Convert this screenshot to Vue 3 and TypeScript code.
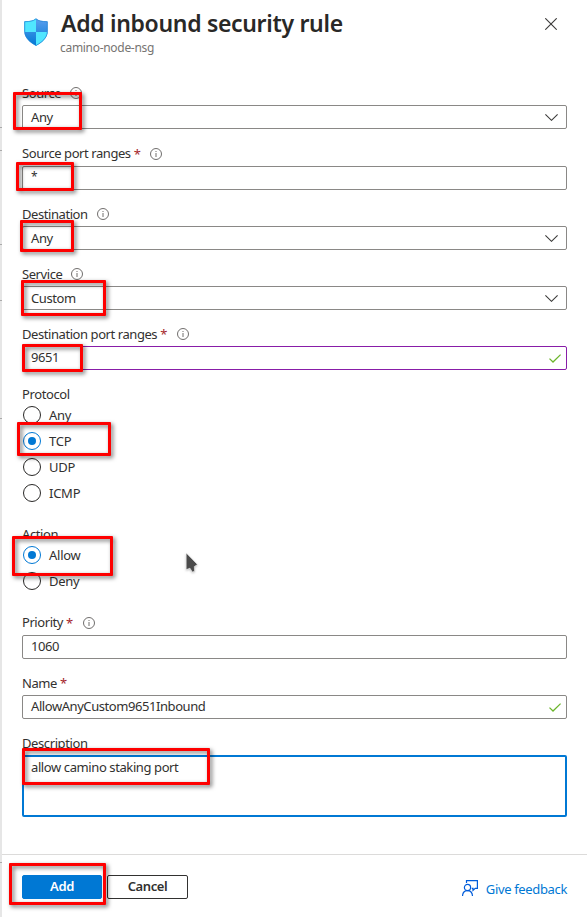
<script setup lang="ts">
import { ref } from 'vue'

interface Field {
  id: string
  label: string
  value: string
  kind: 'select' | 'text'
  required?: boolean
  info?: boolean
  valid?: boolean
  edited?: boolean
}

interface Choice {
  id: string
  label: string
  options: string[]
}

const trafficFields: Field[] = [
  { id: 'source', label: 'Source', value: 'Any', kind: 'select', info: true },
  { id: 'source-ports', label: 'Source port ranges', value: '*', kind: 'text', required: true, info: true },
  { id: 'destination', label: 'Destination', value: 'Any', kind: 'select', info: true },
  { id: 'service', label: 'Service', value: 'Custom', kind: 'select', info: true },
  { id: 'destination-ports', label: 'Destination port ranges', value: '9651', kind: 'text', required: true, info: true, valid: true, edited: true },
]

const choices: Choice[] = [
  { id: 'protocol', label: 'Protocol', options: ['Any', 'TCP', 'UDP', 'ICMP'] },
  { id: 'action', label: 'Action', options: ['Allow', 'Deny'] },
]

const ruleFields: Field[] = [
  { id: 'priority', label: 'Priority', value: '1060', kind: 'text', required: true, info: true },
  { id: 'name', label: 'Name', value: 'AllowAnyCustom9651Inbound', kind: 'text', required: true, valid: true },
]

const groups = [
  { id: 'traffic', fields: trafficFields, choices },
  { id: 'rule', fields: ruleFields, choices: [] as Choice[] },
]

const selected = ref<Record<string, string>>({ protocol: 'TCP', action: 'Allow' })

const highlights = ['source', 'source-ports', 'destination', 'service', 'destination-ports', 'tcp', 'allow', 'description', 'add']
const ticks = ['a', 'b', 'c', 'd', 'e', 'f']
</script>

<template>
  <div class="blade">
    <div class="edge"><i v-for="t in ticks" :key="t" :class="['tick', 'tick-' + t]"></i></div>

    <header class="head">
      <svg class="shield" viewBox="0 0 24 28">
        <defs>
          <linearGradient id="deep" x1="0" y1="0" x2="0" y2="1">
            <stop offset="0" stop-color="#5ea0ef" />
            <stop offset="1" stop-color="#0078d4" />
          </linearGradient>
          <clipPath id="shape">
            <path d="M12 .5C15 3 18 3.2 23.6 3.4V13.5C23.6 20 17.5 24.7 12 27.8C6.5 24.7.4 20 .4 13.5V3.4C6 3.2 9 3 12 .5Z" />
          </clipPath>
        </defs>
        <g clip-path="url(#shape)">
          <path fill="url(#deep)" d="M0 0H24V28H0Z" />
          <path fill="#50e6ff" d="M0 0H12V14H0ZM12 14H24V28H12Z" />
        </g>
        <path fill="none" stroke="#1f84d6" stroke-width=".7" d="M12 .8C15 3.3 18 3.5 23.3 3.7V13.5C23.3 20 17.5 24.5 12 27.5C6.5 24.5.7 20 .7 13.5V3.7C6 3.5 9 3.3 12 .8Z" />
      </svg>
      <div class="titles">
        <h1>Add inbound security rule</h1>
        <p>camino-node-nsg</p>
      </div>
      <svg class="close" viewBox="0 0 12 12"><path d="M.3.3 11.7 11.7M11.7.3.3 11.7" /></svg>
    </header>

    <main class="form">
      <section v-for="g in groups" :key="g.id" :class="['group', g.id]">
        <div v-for="f in g.fields" :key="f.id" :class="['field', f.id]">
          <div class="label">
            <span class="caption">{{ f.label }}</span>
            <span v-if="f.required" class="star">*</span>
            <svg v-if="f.info" class="info" viewBox="0 0 12 12">
              <circle cx="6" cy="6" r="5.5" /><path d="M6 5V9M6 3V4" />
            </svg>
          </div>
          <div :class="['box', f.kind, { edited: f.edited }]">
            <span class="value">{{ f.value }}</span>
            <svg v-if="f.kind === 'select'" class="chevron" viewBox="0 0 13 7"><path d="M.4.4 6.5 6.3 12.6.4" /></svg>
            <svg v-if="f.valid" class="check" viewBox="0 0 12 9"><path d="M.5 4.6 4 8 11.6.6" /></svg>
          </div>
        </div>

        <div v-for="c in g.choices" :key="c.id" :class="['choice', c.id]">
          <div class="label">{{ c.label }}</div>
          <div v-for="o in c.options" :key="o" class="option" @click="selected[c.id] = o">
            <span :class="['radio', { on: selected[c.id] === o }]"></span>
            <span>{{ o }}</span>
          </div>
        </div>
      </section>

      <div class="field">
        <div class="label"><span>Description</span></div>
        <div class="area"><span class="note">allow camino staking port</span></div>
      </div>
    </main>

    <footer class="foot">
      <button class="btn primary">Add</button>
      <button class="btn">Cancel</button>
      <a class="feedback">
        <svg viewBox="0 0 16 16">
          <circle cx="5.5" cy="7.5" r="3.1" />
          <path d="M.5 16C.7 12.6 2.8 10.7 5.5 10.7S10.3 12.6 10.5 16M4.5 3V.7H15.4V8.3H13.2L11 10.4V8.3H9.7" />
        </svg>
        <span>Give feedback</span>
      </a>
    </footer>

    <i v-for="h in highlights" :key="h" :class="['mark', 'mark-' + h]"></i>
    <svg class="cursor" viewBox="0 0 14 22">
      <path d="M1.2 1V17.6L5 16.2 7.3 20 9.6 19.2 9.3 14.6 12.4 12.4Z" />
    </svg>
  </div>
</template>

<style>
body { margin: 0; background: #fff; }
</style>

<style scoped>
.blade {
  position: relative;
  box-sizing: border-box;
  width: 587px;
  height: 917px;
  overflow: hidden;
  display: flex;
  flex-direction: column;
  background: #fff;
  color: #323130;
  font: 13px/20px "Noto Sans", "Open Sans", sans-serif;
  letter-spacing: -0.4px;
}
.edge { position: absolute; left: 0; top: 0; width: 2px; height: 917px; background: #e6e6e6; }
.tick { position: absolute; left: 0; width: 2px; height: 1px; background: #aaa; }
.tick-a { top: 127px; }
.tick-b { top: 150px; }
.tick-c { top: 244px; }
.tick-d { top: 300px; }
.tick-e { top: 418px; }
.tick-f { top: 862px; }

.head {
  display: flex;
  align-items: flex-start;
  box-sizing: border-box;
  height: 83px;
  flex: none;
  padding: 8px 30px 0 24px;
}
.shield { width: 24px; height: 28px; margin-top: 10px; }
.titles { flex: 1; padding-left: 12px; white-space: nowrap; }
h1 {
  margin: -1px 0 0;
  padding: 0 0 1px 1px;
  font-size: 23px;
  line-height: 32px;
  font-weight: 600;
  letter-spacing: -0.32px;
  color: #292827;
}
p { margin: 0; font-size: 12px; line-height: 16px; letter-spacing: -0.3px; color: #767472; }
.close { width: 12px; height: 12px; margin-top: 10px; }
.close path, .chevron path { fill: none; stroke: #3b3a39; stroke-width: 1.1; }

.form { padding: 0 20px 0 22px; height: 771px; flex: none; }
.group, .form { display: flex; flex-direction: column; }
.group { gap: 14px; }
.traffic { margin-bottom: 19px; }
.rule { margin-bottom: 14px; }
.source { margin-bottom: 1px; }
.label { display: flex; align-items: center; height: 20px; padding-bottom: 2px; white-space: nowrap; }
.caption { letter-spacing: -0.43px; }
.source-ports .caption, .priority .caption { margin-top: -2px; }
.star { color: #a4262c; margin-left: 3px; }
.info { width: 12px; height: 12px; margin-left: 9px; }
.star + .info { margin-left: 10px; }
.info circle, .info path { fill: none; stroke: #605e5c; stroke-width: 0.9; }
.box {
  display: flex;
  align-items: center;
  box-sizing: border-box;
  height: 24px;
  padding: 0 8px;
  border: 1px solid #8a8886;
  border-radius: 2px;
}
.box.edited { border-color: #881da8; }
.value { flex: 1; letter-spacing: -0.43px; }
.text .value { margin-top: -2px; }
.source-ports .value { font-size: 12px; }
.chevron { width: 13px; height: 7px; }
.check { width: 12px; height: 9px; margin-right: -3px; }
.check path { fill: none; stroke: #6bb52b; stroke-width: 1.3; }

.choice .label { height: 18px; padding: 1px 0 0; box-sizing: border-box; }
.action { margin-top: 4px; }
.option { display: flex; align-items: center; height: 26px; gap: 8px; letter-spacing: -0.25px; }
.radio {
  display: grid;
  place-items: center;
  box-sizing: border-box;
  width: 18px;
  height: 18px;
  margin-left: 1px;
  border: 1px solid #292827;
  border-radius: 50%;
}
.radio.on { border-color: #0078d4; }
.radio.on::after { content: ""; width: 8px; height: 8px; border-radius: 50%; background: #0078d4; }
.area {
  box-sizing: border-box;
  height: 62px;
  padding: 0 7px;
  border: 2px solid #0078d4;
  border-radius: 2px;
}

.foot {
  display: flex;
  align-items: flex-start;
  box-sizing: border-box;
  height: 63px;
  margin-left: 2px;
  padding: 20px 20px 0;
  border-top: 1px solid #dcdbda;
  gap: 5px;
}
.btn {
  box-sizing: border-box;
  width: 80px;
  height: 24px;
  padding: 0 0 2px;
  border: 1px solid #323130;
  border-radius: 2px;
  background: #fff;
  color: #323130;
  font: 600 13px/20px "Noto Sans", "Open Sans", sans-serif;
  letter-spacing: -0.42px;
}
.btn:nth-child(2) { width: 81px; }
.primary { background: #0078d4; border-color: #0078d4; color: #fff; }
.feedback {
  display: flex;
  gap: 8px;
  margin: 4px 0 0 auto;
  color: #0078d4;
  white-space: nowrap;
  letter-spacing: -0.35px;
}
.feedback svg { width: 16px; height: 16px; margin-top: 1px; }
.feedback svg * { fill: none; stroke: #015cda; stroke-width: 1.2; }

.mark {
  position: absolute;
  box-sizing: border-box;
  border: 3px solid #fe0000;
  border-radius: 1px;
  filter: drop-shadow(2px 2px 2px rgba(0, 0, 0, 0.55));
}
.mark-source { left: 13px; top: 92px; width: 69px; height: 38px; }
.mark-source-ports { left: 16px; top: 162px; width: 58px; height: 29px; }
.mark-destination { left: 20px; top: 220px; width: 54px; height: 32px; }
.mark-service { left: 21px; top: 280px; width: 85px; height: 36px; }
.mark-destination-ports { left: 22px; top: 344px; width: 61px; height: 28px; }
.mark-tcp { left: 17px; top: 422px; width: 94px; height: 34px; }
.mark-allow { left: 12px; top: 536px; width: 101px; height: 40px; }
.mark-description { left: 22px; top: 748px; width: 188px; height: 37px; }
.mark-add { left: 9px; top: 863px; width: 97px; height: 42px; }
.cursor {
  position: absolute;
  left: 185px;
  top: 552px;
  width: 14px;
  height: 22px;
  filter: drop-shadow(0 1px 1px rgba(0, 0, 0, 0.25));
}
.cursor path { fill: #4a4a4a; stroke: #fff; stroke-width: 0.5; }
</style>
